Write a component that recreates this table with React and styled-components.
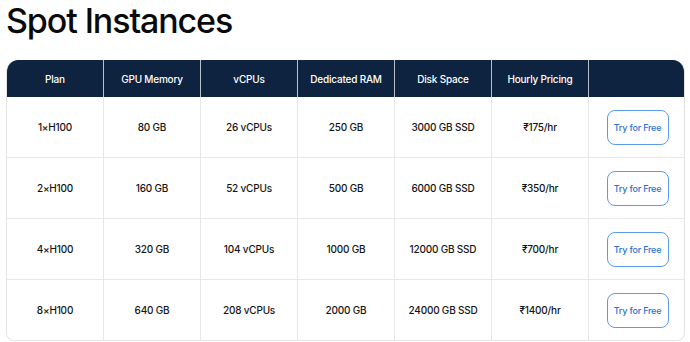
import React from 'react'
import styled, { createGlobalStyle } from 'styled-components'

const Global = createGlobalStyle`
  body {
    margin: 0;
    background: #fff;
    font-family: Inter, "Liberation Sans", sans-serif;
    color: #111;
  }
`

const Page = styled.div`
  padding: 0 5px 0 6px;
`

const Title = styled.h1`
  margin: 0;
  padding-top: 1px;
  height: 59px;
  font-size: 34px;
  font-weight: 500;
  letter-spacing: -1.1px;
  line-height: 40px;
  color: #0a0a0a;
`

const Table = styled.div`
  display: grid;
  grid-template-columns: repeat(7, 97px);
  border: 1px solid #e4e4e4;
  border-top: none;
  border-radius: 12px 12px 8px 8px;
  overflow: hidden;
  width: 679px;
  box-sizing: border-box;
`

const HeadCell = styled.div`
  background: #0e2340;
  color: #fff;
  height: 37px;
  display: flex;
  align-items: center;
  justify-content: center;
  font-size: 10px;
  font-weight: 500;
  letter-spacing: -0.2px;
  border-right: ${p => (p.$last ? 'none' : '1px solid #b9c0ca')};
`

const Cell = styled.div`
  height: 60px;
  display: flex;
  align-items: center;
  justify-content: center;
  font-size: 10px;
  font-weight: 500;
  letter-spacing: -0.2px;
  color: #141414;
  border-right: ${p => (p.$last ? 'none' : '1px solid #e8e8e8')};
  border-bottom: ${p => (p.$bottom ? 'none' : '1px solid #e8e8e8')};
`

const TryButton = styled.button`
  width: 62px;
  height: 35px;
  border: 1px solid #5b9bea;
  border-radius: 8px;
  background: #fff;
  color: #2b72d6;
  font-family: Inter, "Liberation Sans", sans-serif;
  font-size: 9px;
  font-weight: 500;
  letter-spacing: -0.2px;
  padding: 0;
  cursor: pointer;
`

const headers = ['Plan', 'GPU Memory', 'vCPUs', 'Dedicated RAM', 'Disk Space', 'Hourly Pricing', '']

const rows = [
  ['1×H100', '80 GB', '26 vCPUs', '250 GB', '3000 GB SSD', '₹175/hr'],
  ['2×H100', '160 GB', '52 vCPUs', '500 GB', '6000 GB SSD', '₹350/hr'],
  ['4×H100', '320 GB', '104 vCPUs', '1000 GB', '12000 GB SSD', '₹700/hr'],
  ['8×H100', '640 GB', '208 vCPUs', '2000 GB', '24000 GB SSD', '₹1400/hr'],
]

export default function App() {
  return (
    <Page>
      <Global />
      <Title>Spot Instances</Title>
      <Table>
        {headers.map((h, i) => (
          <HeadCell key={i} $last={i === headers.length - 1}>{h}</HeadCell>
        ))}
        {rows.map((r, ri) => (
          <React.Fragment key={ri}>
            {r.map((c, ci) => (
              <Cell key={ci} $bottom={ri === rows.length - 1}>{c}</Cell>
            ))}
            <Cell $last $bottom={ri === rows.length - 1}>
              <TryButton>Try for Free</TryButton>
            </Cell>
          </React.Fragment>
        ))}
      </Table>
    </Page>
  )
}
